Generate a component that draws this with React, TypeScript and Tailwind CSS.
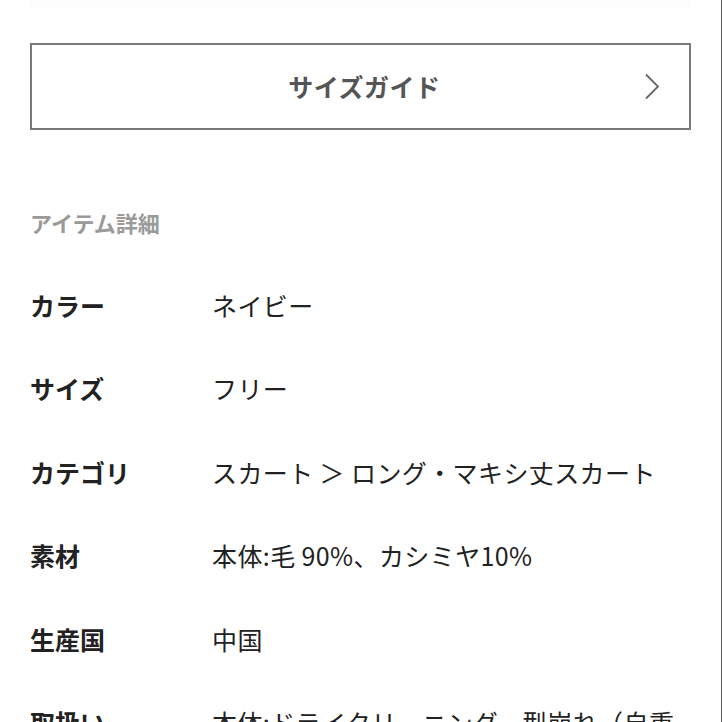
const rows: [string, string][] = [
  ["カラー", "ネイビー"],
  ["サイズ", "フリー"],
  ["カテゴリ", "スカート ＞ ロング・マキシ丈スカート"],
  ["素材", "本体:毛 90%、カシミヤ10%"],
  ["生産国", "中国"],
  ["取扱い", "本体:ドライクリーニング、型崩れ（自重"],
];

export default function App() {
  return (
    <main
      className="w-[722px] h-[722px] overflow-hidden bg-white border-r border-[#555] relative"
      style={{ fontFamily: '"Noto Sans CJK JP", "Noto Sans", sans-serif' }}
    >
      <div className="h-[8px] bg-[#fcfcfc] mx-[30px]" />
      <div className="px-[30px] pt-[35px]">
        {/* size guide button */}
        <button className="w-full h-[87px] border-2 border-[#7a7a7a] grid grid-cols-[64px_1fr_64px] items-center">
          <span />
          <span className="text-[25px] font-bold text-[#555] tracking-[0.5px] pl-[8px]">
            サイズガイド
          </span>
          <span className="flex justify-center pr-[10px]">
            <svg width="16" height="27" viewBox="0 0 16 27" fill="none">
              <path d="M2 1.5 L14 13.5 L2 25.5" stroke="#666" strokeWidth="1.8" />
            </svg>
          </span>
        </button>

        <h2 className="mt-[77px] text-[22px] leading-[30px] font-bold text-[#9a9a9a]">
          アイテム詳細
        </h2>

        <div className="mt-[27px]">
          {rows.map(([label, value]) => (
            <div key={label} className="h-[83.4px] flex items-center text-[25px] text-[#222] whitespace-nowrap">
              <div className="w-[182px] font-bold">{label}</div>
              <div className="tracking-[0.4px]">{value}</div>
            </div>
          ))}
        </div>
      </div>
    </main>
  );
}
